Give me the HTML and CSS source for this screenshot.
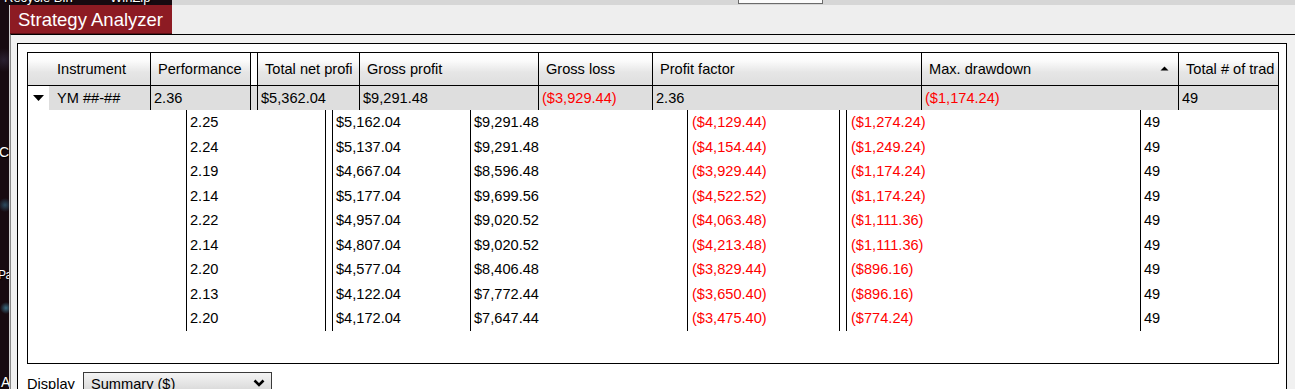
FILE: index.html
```html
<!DOCTYPE html>
<html>
<head>
<meta charset="utf-8">
<title>Strategy Analyzer</title>
<link rel="stylesheet" href="styles.css">
</head>
<body>
<div class="desktop">
  <div class="backwin"><div class="backbtn"></div></div>
  <span class="dicon i1">Recycle Bin</span>
  <span class="dicon i2">WinZip</span>
  <span class="dicon i3">C</span>
  <span class="dicon i4">Pa</span>
  <span class="dicon i5">A</span>

  <div class="window">
    <div class="titlebar"><div class="tab">Strategy Analyzer</div></div>
    <div class="wbody">
      <div class="panel">
        <div class="grid">
          <div class="hrow">
            <div class="hc hc-inst">Instrument</div>
            <div class="hc">Performance</div>
            <div class="hc hc-gap"></div>
            <div class="hc">Total net profi</div>
            <div class="hc">Gross profit</div>
            <div class="hc">Gross loss</div>
            <div class="hc">Profit factor</div>
            <div class="hc hc-sort"><span>Max. drawdown</span><svg class="sort" width="9" height="5" viewBox="0 0 9 5"><polygon points="0.5,4.5 4.5,0.5 8.5,4.5" fill="#000"/></svg></div>
            <div class="hc hc-last">Total # of trad</div>
          </div>

          <div class="prow">
            <div class="pc pc-inst"><div class="exp"><svg width="11" height="6" viewBox="0 0 11 6"><polygon points="0,0 11,0 5.5,6" fill="#000"/></svg></div><div class="iname">YM ##-##</div></div>
            <div class="pc">2.36</div>
            <div class="pc"></div>
            <div class="pc">$5,362.04</div>
            <div class="pc">$9,291.48</div>
            <div class="pc neg">($3,929.44)</div>
            <div class="pc">2.36</div>
            <div class="pc neg">($1,174.24)</div>
            <div class="pc pc-last">49</div>
          </div>

          <div class="crows">
            <div class="crow"><div class="cb"></div><div class="cc">2.25</div><div class="cc"></div><div class="cc">$5,162.04</div><div class="cc">$9,291.48</div><div class="cc w neg">($4,129.44)</div><div class="cc"></div><div class="cc w neg">($1,274.24)</div><div class="cc">49</div></div>
            <div class="crow"><div class="cb"></div><div class="cc">2.24</div><div class="cc"></div><div class="cc">$5,137.04</div><div class="cc">$9,291.48</div><div class="cc w neg">($4,154.44)</div><div class="cc"></div><div class="cc w neg">($1,249.24)</div><div class="cc">49</div></div>
            <div class="crow"><div class="cb"></div><div class="cc">2.19</div><div class="cc"></div><div class="cc">$4,667.04</div><div class="cc">$8,596.48</div><div class="cc w neg">($3,929.44)</div><div class="cc"></div><div class="cc w neg">($1,174.24)</div><div class="cc">49</div></div>
            <div class="crow"><div class="cb"></div><div class="cc">2.14</div><div class="cc"></div><div class="cc">$5,177.04</div><div class="cc">$9,699.56</div><div class="cc w neg">($4,522.52)</div><div class="cc"></div><div class="cc w neg">($1,174.24)</div><div class="cc">49</div></div>
            <div class="crow"><div class="cb"></div><div class="cc">2.22</div><div class="cc"></div><div class="cc">$4,957.04</div><div class="cc">$9,020.52</div><div class="cc w neg">($4,063.48)</div><div class="cc"></div><div class="cc w neg">($1,111.36)</div><div class="cc">49</div></div>
            <div class="crow"><div class="cb"></div><div class="cc">2.14</div><div class="cc"></div><div class="cc">$4,807.04</div><div class="cc">$9,020.52</div><div class="cc w neg">($4,213.48)</div><div class="cc"></div><div class="cc w neg">($1,111.36)</div><div class="cc">49</div></div>
            <div class="crow"><div class="cb"></div><div class="cc">2.20</div><div class="cc"></div><div class="cc">$4,577.04</div><div class="cc">$8,406.48</div><div class="cc w neg">($3,829.44)</div><div class="cc"></div><div class="cc w neg">($896.16)</div><div class="cc">49</div></div>
            <div class="crow"><div class="cb"></div><div class="cc">2.13</div><div class="cc"></div><div class="cc">$4,122.04</div><div class="cc">$7,772.44</div><div class="cc w neg">($3,650.40)</div><div class="cc"></div><div class="cc w neg">($896.16)</div><div class="cc">49</div></div>
            <div class="crow"><div class="cb"></div><div class="cc">2.20</div><div class="cc"></div><div class="cc">$4,172.04</div><div class="cc">$7,647.44</div><div class="cc w neg">($3,475.40)</div><div class="cc"></div><div class="cc w neg">($774.24)</div><div class="cc">49</div></div>
          </div>
        </div>

        <div class="display">
          <span class="dlabel">Display</span>
          <div class="select"><span>Summary ($)</span><svg class="chev" width="12" height="8" viewBox="0 0 12 8"><polyline points="1.5,1.5 6,6 10.5,1.5" fill="none" stroke="#000" stroke-width="2.6"/></svg></div>
        </div>
      </div>
    </div>
  </div>
</div>
</body>
</html>
```

FILE: styles.css
```css
html, body {
  margin: 0;
  padding: 0;
  height: 100%;
  overflow: hidden;
}
body {
  background: #170a10;
  font-family: "Liberation Sans", Arial, sans-serif;
  font-size: 14.6px;
  color: #000;
}
.desktop {
  position: relative;
  width: 1295px;
  height: 389px;
  overflow: hidden;
  background:
    radial-gradient(circle at 5px 205px, #2b4a5e 0, transparent 7px),
    radial-gradient(circle at 6px 308px, #3a6a80 0, transparent 6px),
    radial-gradient(circle at 4px 60px, #2a2030 0, transparent 12px),
    #170a10;
}
.backwin {
  position: absolute;
  left: 172px;
  top: 0;
  right: 0;
  height: 5px;
  background: #d6d6d6;
}
.backbtn {
  position: absolute;
  left: 566px;
  top: -10px;
  width: 83px;
  height: 12px;
  background: #fbfbfb;
  border: 1px solid #6a6a6a;
}
.dicon {
  position: absolute;
  color: #fff;
  font-size: 13px;
  text-shadow: 1px 1px 1px #000;
  white-space: nowrap;
}
.i1 { left: 4px; top: -10px; }
.i2 { left: 110px; top: -10px; }
.i3 { left: -1px; top: 144px; font-size: 14px; }
.i4 { left: -2px; top: 268px; font-size: 12px; letter-spacing: -0.5px; }
.i5 { left: 1px; top: 374px; font-size: 14px; }

.window {
  position: absolute;
  left: 9px;
  top: 5px;
  width: 1292px;
  height: 400px;
  border-left: 1px solid #cfcfcf;
  display: flex;
  flex-direction: column;
}
.titlebar {
  height: 29px;
  flex: none;
  display: flex;
  background: #eeeeee;
}
.tab {
  width: 162px;
  height: 29px;
  box-sizing: border-box;
  background: #8d1b23;
  color: #fff;
  font-size: 18.5px;
  line-height: 29px;
  padding-left: 8px;
  white-space: nowrap;
  border-bottom: 1px solid #5c0f15;
}
.wbody {
  flex: 1;
  border-left: 1px solid #8a8a8a;
  border-top: 1px solid #000;
  background: #f1f1f1;
  padding: 8px 0 0 6px;
}
.panel {
  width: 1270px;
  height: 420px;
  box-sizing: border-box;
  border: 1px solid #000;
  border-bottom: none;
  background: #fff;
  padding: 8px 7px 0 9px;
}
.grid {
  width: 1252px;
  height: 312px;
  box-sizing: border-box;
  border: 1px solid #000;
  background: #fff;
}
.hrow, .prow {
  display: grid;
  grid-template-columns: 123px 100px 7px 102px 179px 114px 269px 257px 99px;
}
.hrow {
  height: 33px;
  box-sizing: border-box;
  border-bottom: 1px solid #000;
  background: linear-gradient(to bottom, #ffffff 0%, #fbfbfb 25%, #e6e6e6 60%, #dedede 100%);
}
.hc {
  box-sizing: border-box;
  border-right: 1px solid #000;
  padding-left: 7px;
  line-height: 32px;
  white-space: nowrap;
  overflow: hidden;
}
.hc-inst { padding-left: 29px; }
.hc-gap { padding: 0; background: #fff; }
.hc-last { border-right: none; }
.hc-sort {
  display: flex;
  align-items: center;
  justify-content: space-between;
  padding-right: 9px;
}
.sort { margin-top: -2px; }

.prow { height: 24px; }
.pc {
  box-sizing: border-box;
  border-right: 1px solid #000;
  background: #dedede;
  padding-left: 3px;
  line-height: 24px;
  white-space: nowrap;
  overflow: hidden;
}
.pc-last { border-right: none; }
.pc-inst {
  display: flex;
  padding-left: 0;
}
.exp {
  width: 21px;
  flex: none;
  background: #fff;
  display: flex;
  align-items: center;
  padding-left: 5px;
  box-sizing: border-box;
}
.iname {
  flex: 1;
  padding-left: 8px;
}
.neg { color: #ff0000; }

.crow {
  display: grid;
  grid-template-columns: 158px 139px 7px 138px 217px 152px 7px 294px 138px;
  height: 24.5px;
}
.cc {
  box-sizing: border-box;
  border-left: 1px solid #000;
  padding-left: 3px;
  line-height: 24.5px;
  white-space: nowrap;
  overflow: hidden;
}
.cc.w { padding-left: 4px; }

.display {
  margin-top: 8px;
  display: flex;
  align-items: flex-start;
}
.dlabel {
  width: 56px;
  line-height: 24px;
}
.select {
  width: 189px;
  height: 24px;
  box-sizing: border-box;
  border: 1px solid #3a3a3a;
  background: linear-gradient(to bottom, #f4f4f4, #d2d2d2);
  display: flex;
  align-items: center;
  justify-content: space-between;
  padding: 0 6px 0 7px;
  line-height: 22px;
}
.chev { margin-top: -2px; }
```
